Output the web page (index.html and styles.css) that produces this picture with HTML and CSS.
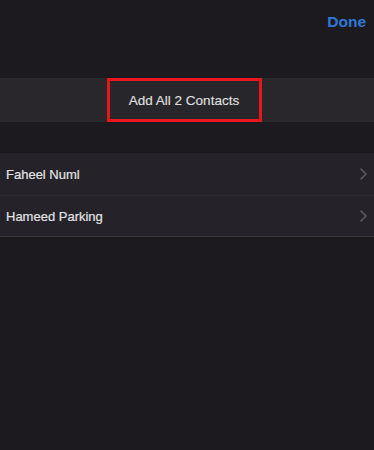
FILE: index.html
```html
<!DOCTYPE html>
<html>
<head>
<meta charset="utf-8">
<link rel="stylesheet" href="styles.css">
</head>
<body>
<div class="screen">
  <div class="nav">
    <span class="done">Done</span>
  </div>
  <div class="band">
    <div class="add-btn">Add All 2 Contacts</div>
  </div>
  <div class="list">
    <div class="row">
      <span class="name">Faheel Numl</span>
      <svg class="chev" width="7" height="12" viewBox="0 0 7 12"><path d="M1 1l5 5-5 5" fill="none" stroke="#5c5a60" stroke-width="1.6" stroke-linecap="round" stroke-linejoin="round"/></svg>
    </div>
    <div class="row">
      <span class="name">Hameed Parking</span>
      <svg class="chev" width="7" height="12" viewBox="0 0 7 12"><path d="M1 1l5 5-5 5" fill="none" stroke="#5c5a60" stroke-width="1.6" stroke-linecap="round" stroke-linejoin="round"/></svg>
    </div>
  </div>
</div>
</body>
</html>
```
FILE: styles.css
```css
html, body {
  margin: 0;
  padding: 0;
  background: #1c1a1f;
}
.screen {
  width: 374px;
  height: 450px;
  background: #1c1a1f;
  font-family: "Liberation Sans", Arial, sans-serif;
  overflow: hidden;
}
.nav {
  height: 78px;
  display: flex;
  justify-content: flex-end;
  align-items: flex-start;
  padding-right: 8px;
  box-sizing: border-box;
}
.done {
  margin-top: 13px;
  color: #2f78d8;
  font-size: 15.5px;
  font-weight: bold;
}
.band {
  height: 44px;
  background: #29272c;
  display: flex;
  justify-content: center;
  padding-right: 6px;
  box-sizing: border-box;
}
.add-btn {
  width: 155px;
  height: 44px;
  box-sizing: border-box;
  border: 3px solid #e6161c;
  display: flex;
  align-items: center;
  justify-content: center;
  color: #dedede;
  font-size: 13.5px;
  background: #27262b;
  -webkit-text-stroke: 0.2px #dedede;
}
.list {
  margin-top: 31px;
  background: #252329;
  border-bottom: 1px solid #3a383d;
}
.row {
  height: 42px;
  display: flex;
  align-items: center;
  justify-content: space-between;
  padding: 0 6px 0 6px;
  box-sizing: border-box;
}
.row + .row {
  border-top: 1px solid #2d2b31;
  height: 41px;
}
.name {
  color: #e2e2e4;
  font-size: 13px;
  -webkit-text-stroke: 0.2px #e2e2e4;
}
.chev {
  margin-right: 1px;
}
```
